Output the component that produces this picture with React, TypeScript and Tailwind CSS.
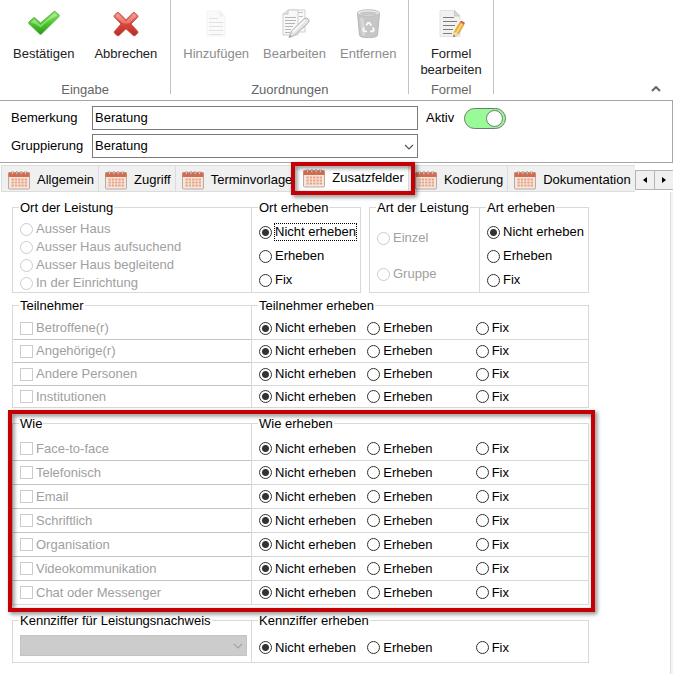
import { useState, type ReactNode } from "react";

function CheckIcon() {
  return (
    <svg width="32" height="32" viewBox="0 0 32 32" aria-hidden="true">
      <defs>
        <linearGradient id="ok" x1="0" y1="0" x2="0" y2="1">
          <stop offset="0" stopColor="#8fe86a" />
          <stop offset="0.5" stopColor="#4fc92e" />
          <stop offset="1" stopColor="#2a9a14" />
        </linearGradient>
      </defs>
      <path d="M0.8 14.2 5.6 9.8q.7-.5 1.4.2l5.6 5L26 3.6q.8-.5 1.4.1l3.6 3.4q.7.8 0 1.5L13.4 26q-.9.7-1.7 0L.9 15.6q-.6-.8-.1-1.4Z" fill="url(#ok)" stroke="#44a030" strokeWidth="0.8" />
      <path d="M2.4 14.8 6.3 11l6.2 5.9L26.6 5.2l2.6 2.4Q20 12 12.6 19.6 8 15.5 2.4 14.8Z" fill="#fff" opacity="0.35" />
    </svg>
  );
}

function CrossIcon() {
  return (
    <svg width="32" height="32" viewBox="0 0 32 32" aria-hidden="true">
      <defs>
        <linearGradient id="no" x1="0" y1="0" x2="0" y2="1">
          <stop offset="0" stopColor="#ee8878" />
          <stop offset="0.45" stopColor="#dc4a3e" />
          <stop offset="1" stopColor="#bc2a26" />
        </linearGradient>
      </defs>
      <path d="M4.4 7.200 7 4.800q1-.8 2 0L16 11.800l7-7q1-.8 2 0l2.600 2.600q.8 1 0 2L21 16l6.600 7.200q.8 1 0 2L25.200 27.400q-1 .8-2 0L16 20.800l-7 6.600q-1 .8-2 0L4.600 25.200q-.8-1 0-2L11 16 4.400 9.200q-.8-1 0-2Z" fill="url(#no)" stroke="#b8443c" strokeWidth="0.8" />
      <path d="M5.2 8 8 5.600l8 7.800 8-7.800L26.600 8l-7 7q-3.600 1.200-7 0Z" fill="#fff" opacity="0.25" />
    </svg>
  );
}

function SheetIcon() {
  return (
    <svg width="32" height="32" viewBox="0 0 32 32" aria-hidden="true">
      <path d="M7 3h13l5 5v20H7Z" fill="#fafafa" stroke="#f3f3f3" />
      <path d="M20 3v5h5" fill="#f2f2f2" stroke="#eeeeee" />
      <path d="M9 10.500h9M9 14.500h14M9 18.500h14M9 22.500h14M9 26.500h14" stroke="#e2e2e2" />
    </svg>
  );
}

function EditSheetIcon() {
  return (
    <svg width="32" height="32" viewBox="0 0 32 32" aria-hidden="true">
      <path d="M10 2h16v22H10Z" fill="#f9f9f9" stroke="#cfcfcf" />
      <path d="M12 4.500h12M20 8.500h4" stroke="#c0c0c0" />
      <path d="m4 6 5-4h10v25H4Z" fill="#f8f8f8" stroke="#cdcdcd" />
      <path d="M4 6h5V2" fill="#e6e6e6" stroke="#c4c4c4" />
      <path d="M6 9.500h11M6 12.500h11M6 15.500h10M6 18.500h8M6 21.500h6M6 24.500h5" stroke="#b4b4b4" />
      <path d="M10 29.500 12.500 23 25 10.800q3-2 4.800.6 1 2-1 4L15.600 27.400Z" fill="#e2e2e2" stroke="#b4b4b4" />
      <path d="m13 23.500 12.500-12 1.500 1.400L14.600 25Z" fill="#f7f7f7" />
      <path d="m10 29.500 1-2.600 1.600 1.500Z" fill="#999999" />
    </svg>
  );
}

function BinIcon() {
  return (
    <svg width="32" height="32" viewBox="0 0 32 32" aria-hidden="true">
      <path d="M5.500 5 7.500 27q.4 2.600 9 2.600t9-2.600l2-22Z" fill="#c6c6c6" stroke="#b8b8b8" />
      <path d="M8 9.500 10 27q1.500 1 3 1.200L12 10.500Z" fill="#d6d6d6" />
      <ellipse cx="16.500" cy="5" rx="11" ry="3.300" fill="#ececec" stroke="#c0c0c0" />
      <ellipse cx="16.500" cy="5.500" rx="8.800" ry="2" fill="#c8c8c8" />
      <path d="m14.300 17.500 1.500-2.600h1.800l1.700 2.800M20.600 19.500l1.400 2.300-1 1.500h-3M15 23.300h-3l-1-1.500 1.400-2.300" fill="none" stroke="#fafafa" strokeWidth="1.800" />
    </svg>
  );
}

function FormulaIcon() {
  return (
    <svg width="32" height="32" viewBox="0 0 32 32" aria-hidden="true">
      <path d="M5 2.500h14.500l5.500 5.500V28.500H5Z" fill="#f1f1f1" stroke="#e2e2e2" />
      <path d="M19.500 2.500V8H25Z" fill="#d6d6d6" stroke="#c8c8c8" />
      <path d="M8 9.500h11M8 13.500h14M8 17.500h12M8 21.500h10M8 25.500h9" stroke="#7c7c7c" />
      <path d="m18.500 29 .8-5.200 5.700-9.600 4 2.400-5.600 9.600Z" fill="#f0b63c" stroke="#c98d26" strokeWidth="0.6" />
      <path d="m20.800 24.800 5.600-9.600 1.200.7-5.600 9.600Z" fill="#fbd978" />
      <path d="m25 14.200.6-1q.6-.7 1.400-.3l2.300 1.400q.8.6.4 1.300l-.7 1Z" fill="#dc5c46" />
      <path d="m18.500 29 .8-5.200 4.100 2.400Z" fill="#f3dcb4" />
      <path d="m18.500 29 .3-2 1.400.9Z" fill="#444444" />
    </svg>
  );
}

function CalendarIcon() {
  return (
    <svg width="22" height="20" viewBox="0 0 22 20" aria-hidden="true" className="shrink-0">
      <rect x="0.500" y="2.500" width="21" height="16.500" rx="1" fill="#f4e6dc" stroke="#b9aaa2" />
      <path d="M0.500 2.500h21V7H.5Z" fill="#d9694b" />
      <path d="M3.500 9.500h15.500M3.500 12.500h15.500M3.500 15.500h15.500" stroke="#e9a284" strokeWidth="2" strokeDasharray="2.300 1" />
      <path d="M4.500 1v4M8.800 1v4M13.200 1v4M17.500 1v4" stroke="#a58b82" strokeWidth="1.600" />
      <path d="M4.500 1v3M8.800 1v3M13.200 1v3M17.500 1v3" stroke="#e6dcd8" strokeWidth="0.700" />
    </svg>
  );
}

function Chevron({ className, weight = 1.2 }: { className: string; weight?: number }) {
  return (
    <svg width="10" height="6" viewBox="0 0 10 6" aria-hidden="true" className={className}>
      <path d="m1 1 4 4 4-4" fill="none" stroke="currentColor" strokeWidth={weight} />
    </svg>
  );
}

function RibbonButton({ icon, label, disabled }: { icon: ReactNode; label: ReactNode; disabled?: boolean }) {
  return (
    <button type="button" disabled={disabled} className="flex flex-col items-center gap-1.5 px-1 pt-2 leading-4 text-[#222] disabled:text-[#8c8c8c]">
      {icon}
      <span>{label}</span>
    </button>
  );
}

function RibbonGroup({ label, className, children }: { label: string; className: string; children: ReactNode }) {
  return (
    <>
      <section aria-label={label} className={`flex flex-col ${className}`}>
        <div className="flex h-[82px] items-start justify-center">{children}</div>
        <div className="text-center leading-4 text-[#666]">{label}</div>
      </section>
      <div className="h-[94px] w-px bg-[#c3c3c3]" />
    </>
  );
}

function Radio({ name, label, checked, disabled, focus }: { name: string; label: string; checked?: boolean; disabled?: boolean; focus?: boolean }) {
  return (
    <label className={`flex items-center gap-0.5 ${disabled ? "text-[#a0a0a0]" : "text-black"}`}>
      <input
        type="radio"
        name={name}
        defaultChecked={checked}
        disabled={disabled}
        className="size-[13px] shrink-0 appearance-none rounded-full border border-[#333] bg-white checked:bg-[radial-gradient(circle,#333_3px,white_4px)] disabled:border-[#cccccc]"
      />
      <span className={`whitespace-nowrap border border-dotted leading-4 ${focus ? "border-black" : "border-transparent"}`}>{label}</span>
    </label>
  );
}

function Check({ label }: { label: string }) {
  return (
    <label className="flex items-center gap-[3px] text-[#a0a0a0]">
      <input type="checkbox" disabled className="size-[13px] shrink-0 appearance-none border border-[#cccccc] bg-white" />
      <span>{label}</span>
    </label>
  );
}

function Group({ title, last, className = "", children }: { title: string; last?: boolean; className?: string; children: ReactNode }) {
  return (
    <fieldset className={`min-w-0 border-y border-l border-[#d9d9d9] ${last ? "border-r" : ""}`}>
      <legend className="ml-1.5 whitespace-nowrap px-px leading-[15px]">{title}</legend>
      <div className={className}>{children}</div>
    </fieldset>
  );
}

function Choice({ name }: { name: string }) {
  return (
    <div role="radiogroup" aria-label={name} className="grid h-full grid-cols-3 items-center pr-1">
      <Radio name={name} label="Nicht erheben" checked />
      <Radio name={name} label="Erheben" />
      <Radio name={name} label="Fix" />
    </div>
  );
}

function Matrix({ title, askTitle, items, top, row }: { title: string; askTitle: string; items: string[]; top: string; row: string }) {
  return (
    <div className="grid grid-cols-[239fr_338fr]">
      <Group title={title} className={`divide-y divide-[#c4c4c4] ${top}`}>
        {items.map((item) => (
          <div key={item} className={`flex items-center pl-[7px] ${row}`}>
            <Check label={item} />
          </div>
        ))}
      </Group>
      <Group title={askTitle} last className={`divide-y divide-[#d9d9d9] ${top}`}>
        {items.map((item) => (
          <div key={item} className={`pl-[7px] ${row}`}>
            <Choice name={item} />
          </div>
        ))}
      </Group>
    </div>
  );
}

const highlight = "pointer-events-none absolute border-4 border-[#c40004] drop-shadow-[2px_2px_2px_rgba(0,0,0,0.5)]";
const tabs = ["Allgemein", "Zugriff", "Terminvorlage", "Zusatzfelder", "Kodierung", "Dokumentation"];
const active = "Zusatzfelder";

export default function App() {
  const [note, setNote] = useState("Beratung");

  return (
    <div className="flex min-h-screen flex-col bg-white font-['Liberation_Sans',Arial,sans-serif] text-[13px] text-black">
      <header className="flex h-[100px] items-start">
        <RibbonGroup label="Eingabe" className="px-[9px]">
          <div className="flex gap-3">
            <RibbonButton icon={<CheckIcon />} label="Bestätigen" />
            <RibbonButton icon={<CrossIcon />} label="Abbrechen" />
          </div>
        </RibbonGroup>
        <RibbonGroup label="Zuordnungen" className="px-2">
          <div className="flex gap-1.5">
            <RibbonButton icon={<SheetIcon />} label="Hinzufügen" disabled />
            <RibbonButton icon={<EditSheetIcon />} label="Bearbeiten" disabled />
            <RibbonButton icon={<BinIcon />} label="Entfernen" disabled />
          </div>
        </RibbonGroup>
        <RibbonGroup label="Formel" className="px-[7px]">
          <RibbonButton icon={<FormulaIcon />} label={<>Formel<br />bearbeiten</>} />
        </RibbonGroup>
        <button type="button" aria-label="Menüband ausblenden" className="ml-auto self-end px-3 py-2 text-[#666]">
          <Chevron className="rotate-180" weight={2} />
        </button>
      </header>

      <section className="flex items-start gap-2 border-y border-r border-[#a6a6a6] pt-[5px] pb-1 pl-[11px]">
        <div className="grid grid-cols-[81px_326px] items-center gap-y-1">
          <label htmlFor="note">Bemerkung</label>
          <input id="note" value={note} onChange={(e) => setNote(e.target.value)} className="h-6 border border-[#7a7a7a] bg-white px-0.5 pb-0.5" />
          <label htmlFor="grouping">Gruppierung</label>
          <div className="relative">
            <select id="grouping" className="block h-6 w-full appearance-none border border-[#7a7a7a] bg-white px-0.5">
              <option>Beratung</option>
            </select>
            <Chevron className="pointer-events-none absolute top-[10px] right-1 text-[#555]" />
          </div>
        </div>
        <label className="flex h-6 items-center gap-[10px]">
          Aktiv
          <input
            type="checkbox"
            role="switch"
            defaultChecked
            className="relative h-[21px] w-[42px] appearance-none rounded-full border border-[#6b7d6b] bg-[#ddd] before:absolute before:top-px before:left-px before:size-[17px] before:rounded-full before:border before:border-[#6b7d6b] before:bg-white checked:bg-[#98fb98] checked:before:left-[21px]"
          />
        </label>
      </section>

      <nav className="flex h-[29px] items-end pl-px">
        <div role="tablist" className="flex items-end">
          {tabs.map((tab) =>
            tab === active ? (
              <button key={tab} type="button" role="tab" aria-selected="true" className="relative z-10 -ml-px flex h-[29px] items-center gap-[7px] bg-white pr-1 pl-2">
                <CalendarIcon />
                {tab}
                <span className={`${highlight} -top-px -right-[7px] -bottom-[3px] -left-1`} />
              </button>
            ) : (
              <button key={tab} type="button" role="tab" aria-selected="false" className="flex h-[27px] items-center gap-[7px] border-y border-l border-[#dcdcdc] bg-[#f0f0f0] pt-[3px] pr-1 pl-1.5">
                <CalendarIcon />
                {tab}
              </button>
            ),
          )}
        </div>
        <div className="mb-0.5 ml-auto flex">
          <button type="button" aria-label="Zurück" className="-mr-px flex h-5 w-5 items-center justify-center border border-[#b4b4b4] bg-[#f0f0f0]">
            <svg width="4" height="6" viewBox="0 0 4 6" aria-hidden="true"><path d="M4 0v6L0 3Z" /></svg>
          </button>
          <button type="button" aria-label="Weiter" className="mr-px flex h-5 w-5 items-center justify-center border border-[#b4b4b4] bg-[#f0f0f0]">
            <svg width="4" height="6" viewBox="0 0 4 6" aria-hidden="true"><path d="M0 0v6l4-3Z" /></svg>
          </button>
        </div>
      </nav>

      <main className="flex-1 bg-[#f4f4f4] pr-0.5">
        <div className="h-full min-h-[482px] border-r border-[#dcdcdc] bg-white pt-2 pl-3">
          <form className="max-w-[577px]">
            <div className="grid grid-cols-[349fr_220fr] gap-2">
              <div className="grid grid-cols-[239fr_110fr]">
                <Group title="Ort der Leistung" className="grid auto-rows-[18px] pt-[5px] pl-[7px]">
                  <Radio name="ort" label="Ausser Haus" disabled />
                  <Radio name="ort" label="Ausser Haus aufsuchend" disabled />
                  <Radio name="ort" label="Ausser Haus begleitend" disabled />
                  <Radio name="ort" label="In der Einrichtung" disabled />
                </Group>
                <Group title="Ort erheben" last className="grid auto-rows-[24px] pt-[5px] pl-[7px]">
                  <Radio name="ort-erheben" label="Nicht erheben" checked focus />
                  <Radio name="ort-erheben" label="Erheben" />
                  <Radio name="ort-erheben" label="Fix" />
                </Group>
              </div>
              <div className="grid grid-cols-2">
                <Group title="Art der Leistung" className="grid auto-rows-[36px] pt-[5px] pl-[7px]">
                  <Radio name="art" label="Einzel" disabled />
                  <Radio name="art" label="Gruppe" disabled />
                </Group>
                <Group title="Art erheben" last className="grid auto-rows-[24px] pt-[5px] pl-[7px]">
                  <Radio name="art-erheben" label="Nicht erheben" checked />
                  <Radio name="art-erheben" label="Erheben" />
                  <Radio name="art-erheben" label="Fix" />
                </Group>
              </div>
            </div>

            <div className="mt-[5px]">
              <Matrix
                title="Teilnehmer"
                askTitle="Teilnehmer erheben"
                items={["Betroffene(r)", "Angehörige(r)", "Andere Personen", "Institutionen"]}
                top="pt-1"
                row="h-[23px] last:h-[21px]"
              />
            </div>

            <div className="relative mt-2">
              <Matrix
                title="Wie"
                askTitle="Wie erheben"
                items={["Face-to-face", "Telefonisch", "Email", "Schriftlich", "Organisation", "Videokommunikation", "Chat oder Messenger"]}
                top="pt-1.5"
                row="h-6 last:h-[23px]"
              />
              <div className={`${highlight} -top-1.5 -right-1.5 -bottom-[7px] -left-1`} />
            </div>

            <div className="mt-2 grid grid-cols-[239fr_338fr]">
              <Group title="Kennziffer für Leistungsnachweis" className="pt-[7px] pr-1 pb-1.5 pl-[7px]">
                <div className="relative">
                  <select disabled aria-label="Kennziffer für Leistungsnachweis" className="block h-[21px] w-full appearance-none border border-[#c4c4c4] bg-[#cccccc]" />
                  <Chevron className="pointer-events-none absolute top-2 right-1 text-[#a3a3a3]" />
                </div>
              </Group>
              <Group title="Kennziffer erheben" last className="h-[34px] pt-[5px] pl-[7px]">
                <Choice name="Kennziffer" />
              </Group>
            </div>
          </form>
        </div>
      </main>
    </div>
  );
}
